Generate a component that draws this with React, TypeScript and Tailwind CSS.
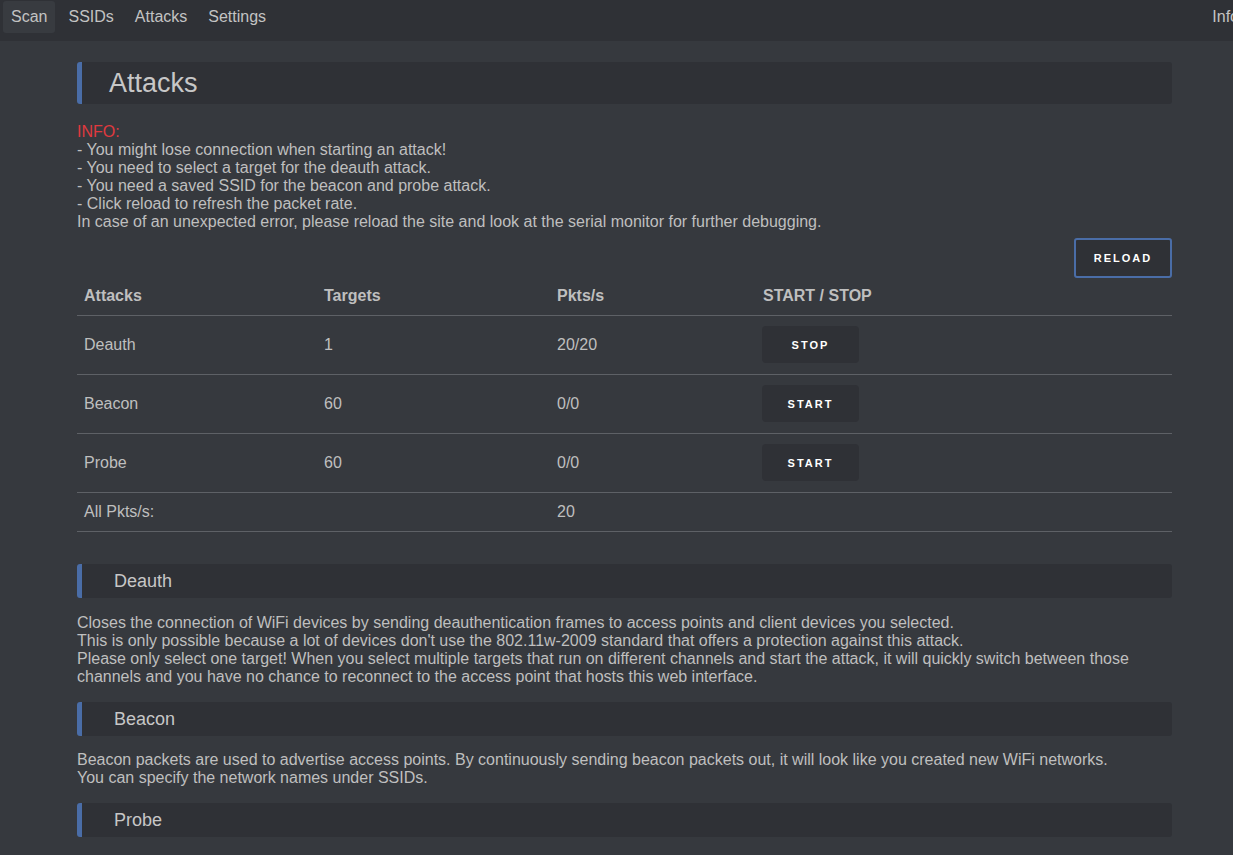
import React from 'react';

const rows = [
  { name: 'Deauth', targets: '1', pkts: '20/20', action: 'STOP' },
  { name: 'Beacon', targets: '60', pkts: '0/0', action: 'START' },
  { name: 'Probe', targets: '60', pkts: '0/0', action: 'START' },
];

function SectionHeading({ title }: { title: string }) {
  return (
    <h2 className="h-[34px] flex items-center pl-[32px] bg-[#2f3136] border-l-[5px] border-[#4a6da7] rounded-[3px] text-[18px] text-[#c7c7c7]">
      {title}
    </h2>
  );
}

function ActionButton({ label }: { label: string }) {
  return (
    <button className="w-[97px] h-[37px] rounded-[4px] bg-[#2f3136] text-white text-[11px] font-bold tracking-[2px]">
      {label}
    </button>
  );
}

export default function App() {
  return (
    <div className="min-h-[855px] bg-[#36393e] text-[#bfbfbf] font-['Liberation_Sans',Arial,sans-serif] text-[16px] leading-[18px]">
      <nav className="h-[41px] bg-[#2f3136] flex items-start justify-between pt-[1px] overflow-hidden">
        <div className="flex items-center gap-[5px] pl-[3px] text-[16px] text-[#c3c3c3]">
          <span className="px-[8px] h-[32px] flex items-center bg-[#383b40] rounded-[3px]">Scan</span>
          <span className="px-[8px] h-[32px] flex items-center">SSIDs</span>
          <span className="px-[8px] h-[32px] flex items-center">Attacks</span>
          <span className="px-[8px] h-[32px] flex items-center">Settings</span>
        </div>
        <span className="h-[32px] flex items-center text-[16px] text-[#c3c3c3] mr-[-6px]">Info</span>
      </nav>

      <main className="w-[1095px] ml-[77px] pt-[21px]">
        <h1 className="h-[42px] flex items-center pl-[27px] bg-[#2f3136] border-l-[5px] border-[#4a6da7] rounded-[3px] text-[27px] text-[#c7c7c7]">
          Attacks
        </h1>

        <p className="mt-[19px]">
          <span className="text-[#e0393e]">INFO:</span>
          <br />- You might lose connection when starting an attack!
          <br />- You need to select a target for the deauth attack.
          <br />- You need a saved SSID for the beacon and probe attack.
          <br />- Click reload to refresh the packet rate.
          <br />In case of an unexpected error, please reload the site and look at the serial monitor for further debugging.
        </p>

        <div className="flex justify-end mt-[7px]">
          <button className="w-[98px] h-[40px] rounded-[3px] border-2 border-[#4a6da7] bg-[#2f3136] text-white text-[11px] font-bold tracking-[2px]">
            RELOAD
          </button>
        </div>

        <table className="w-full border-collapse mt-[5px]">
          <thead>
            <tr className="h-[32px] border-b border-[#5e6166] text-left">
              <th className="w-[240px] pl-[7px] pt-[4px] align-top font-bold">Attacks</th>
              <th className="w-[233px] pl-[7px] pt-[4px] align-top font-bold">Targets</th>
              <th className="w-[206px] pl-[7px] pt-[4px] align-top font-bold">Pkts/s</th>
              <th className="pl-[7px] pt-[4px] align-top font-bold">START / STOP</th>
            </tr>
          </thead>
          <tbody>
            {rows.map((r) => (
              <tr key={r.name} className="h-[59px] border-b border-[#5e6166]">
                <td className="pl-[7px]">{r.name}</td>
                <td className="pl-[7px]">{r.targets}</td>
                <td className="pl-[7px]">{r.pkts}</td>
                <td className="pl-[6px]">
                  <ActionButton label={r.action} />
                </td>
              </tr>
            ))}
            <tr className="h-[39px] border-b border-[#5e6166]">
              <td className="pl-[7px]">All Pkts/s:</td>
              <td></td>
              <td className="pl-[7px]">20</td>
              <td></td>
            </tr>
          </tbody>
        </table>

        <div className="mt-[32px]">
          <SectionHeading title="Deauth" />
          <p className="mt-[16px]">
            Closes the connection of WiFi devices by sending deauthentication frames to access points and client devices you selected.
            <br />This is only possible because a lot of devices don't use the 802.11w-2009 standard that offers a protection against this attack.
            <br />Please only select one target! When you select multiple targets that run on different channels and start the attack, it will quickly switch between those channels and you have no chance to reconnect to the access point that hosts this web interface.
          </p>
        </div>

        <div className="mt-[16px]">
          <SectionHeading title="Beacon" />
          <p className="mt-[15px]">
            Beacon packets are used to advertise access points. By continuously sending beacon packets out, it will look like you created new WiFi networks.
            <br />You can specify the network names under SSIDs.
          </p>
        </div>

        <div className="mt-[16px]">
          <SectionHeading title="Probe" />
        </div>
      </main>
    </div>
  );
}
